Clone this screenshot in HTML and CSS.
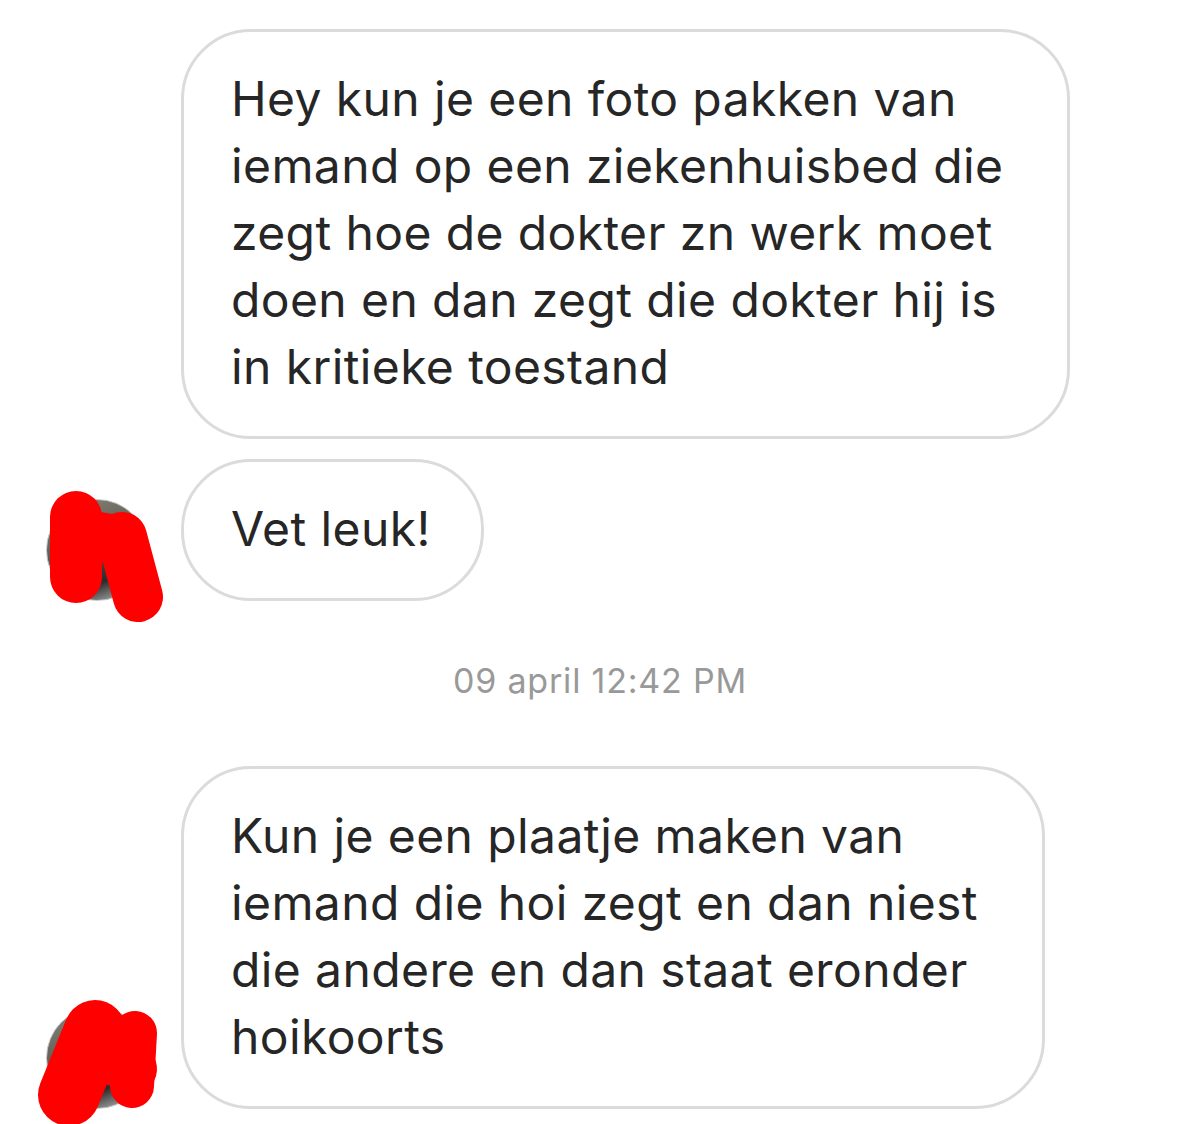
FILE: index.html
```html
<!DOCTYPE html>
<html lang="nl">

<head>
    <meta charset="utf-8">
    <meta name="viewport" content="width=device-width, initial-scale=1.0">
    <title>Berichten</title>
    <link rel="stylesheet" href="styles.css">
</head>

<body>
    <div class="chat">

        <div class="row">
            <div class="avatar_slot"></div>
            <p class="bubble long">Hey kun je een foto pakken van<br>iemand op een ziekenhuisbed die<br>zegt hoe de dokter zn werk moet<br>doen en dan zegt die dokter hij is<br>in kritieke toestand</p>
        </div>

        <div class="row">
            <div class="avatar_slot">
                <div class="avatar"></div>
                <svg class="scribble" width="102" height="102" viewBox="0 0 102 102">
                    <g stroke="#ff0000" stroke-linecap="round" stroke-linejoin="round" fill="none">
                        <path d="M30 18 L30 78" stroke-width="52" />
                        <path d="M31 34 L76 42" stroke-width="50" />
                        <path d="M76 38 L92 98" stroke-width="50" />
                    </g>
                </svg>
            </div>
            <p class="bubble">Vet leuk!</p>
        </div>

        <p class="time">09 april 12:42 PM</p>

        <div class="row">
            <div class="avatar_slot">
                <div class="avatar"></div>
                <svg class="scribble" width="102" height="102" viewBox="0 0 102 102">
                    <g stroke="#ff0000" stroke-linecap="round" stroke-linejoin="round" fill="none">
                        <path d="M49 24 L23 88" stroke-width="62" />
                        <path d="M50 44 L86 62" stroke-width="50" />
                        <path d="M89 26 L86 79" stroke-width="44" />
                    </g>
                </svg>
            </div>
            <p class="bubble long">Kun je een plaatje maken van<br>iemand die hoi zegt en dan niest<br>die andere en dan staat eronder<br>hoikoorts</p>
        </div>

    </div>
</body>

</html>
```

FILE: styles.css
```css
body {
    margin: 0;
    background-color: #ffffff;
    font-family: Inter, "Noto Sans", sans-serif;
    color: #262626;
}

/* --------- CHAT --------------- */
.chat {
    padding-top: 29px;
}

.row {
    display: flex;
    align-items: flex-end;
    margin-bottom: 20px;
}

.avatar_slot {
    position: relative;
    flex: 0 0 102px;
    height: 102px;
    margin-left: 46px;
    margin-right: 33px;
}

.avatar {
    width: 100px;
    height: 100px;
    border-radius: 50%;
    border: 1px solid #c8c8c8;
    background: linear-gradient(160deg, #8a877c 0%, #5d5a52 45%, #2b2b2b 75%, #d9d9d9 100%);
}

.scribble {
    position: absolute;
    top: 0;
    left: 0;
    overflow: visible;
}

/* --------- BUBBLE --------------- */
.bubble {
    margin: 0;
    padding: 33px 50px 36px 47px;
    border: 3px solid #dbdbdb;
    border-radius: 70px;
    font-size: 48px;
    line-height: 67px;
    letter-spacing: 0.4px;
}

.bubble.long {
    padding-right: 64px;
}

/* --------- TIME --------------- */
.time {
    margin: 60px 0 65px;
    text-align: center;
    font-size: 34px;
    line-height: 40px;
    letter-spacing: 0.8px;
    color: #999999;
}
```
